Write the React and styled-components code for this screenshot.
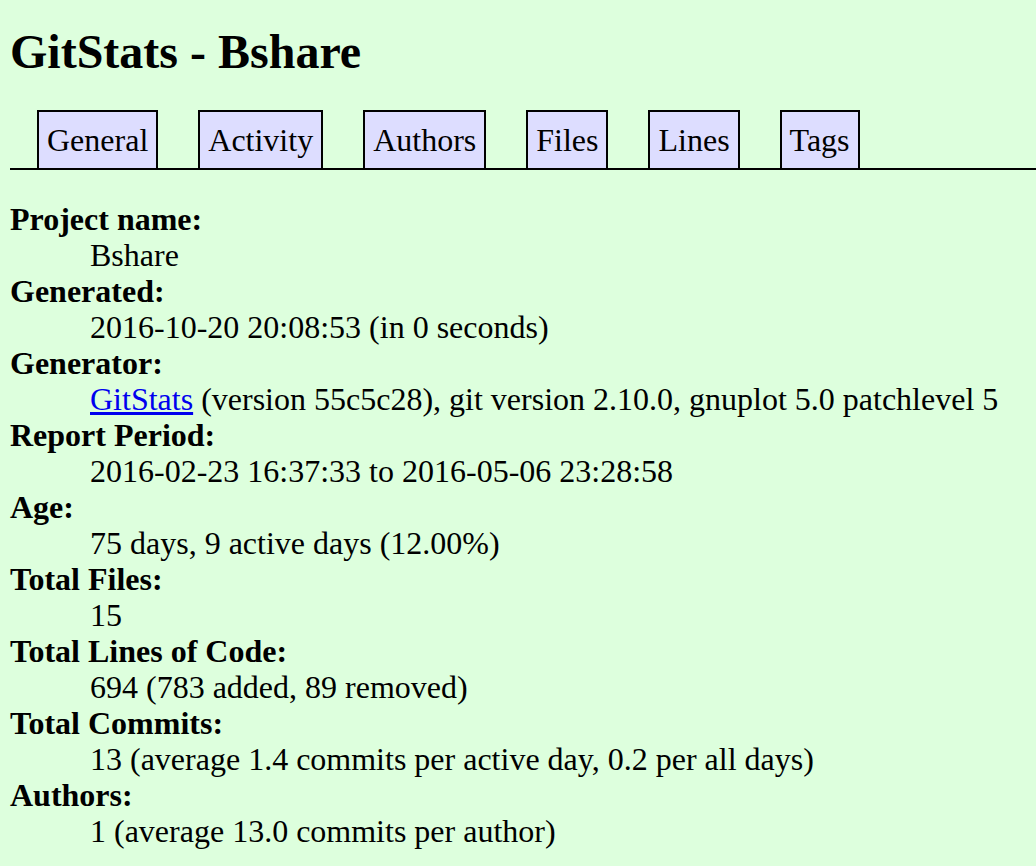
import React from "react";
import styled, { createGlobalStyle } from "styled-components";

const GlobalStyle = createGlobalStyle`
  html, body {
    margin: 0;
    padding: 0;
    background: #ddffdd;
  }
  body {
    color: #000;
    font-family: "Liberation Serif", "Times New Roman", Times, serif;
    font-size: 32px;
    line-height: 36px;
  }
`;

const Page = styled.div`
  padding: 0 0 0 10px;
  min-height: 866px;
  box-sizing: border-box;
`;

const Title = styled.h1`
  margin: 25px 0 31px;
  font-size: 48px;
  line-height: 54px;
  font-weight: bold;
`;

const Nav = styled.nav`
  display: flex;
  align-items: flex-end;
  gap: 40px;
  padding-left: 27px;
  border-bottom: 2px solid #000;
`;

const Tab = styled.a`
  display: block;
  padding: 10px 8px;
  margin-bottom: -2px;
  border: 2px solid #000;
  background: #ddddff;
  color: #000;
  text-decoration: none;
  line-height: 36px;
  cursor: pointer;
`;

const List = styled.dl`
  margin: 31px 0 0;
`;

const Term = styled.dt`
  font-weight: bold;
`;

const Desc = styled.dd`
  margin: 0 0 0 80px;
`;

const Link = styled.a`
  color: #0000ee;
  text-decoration: underline;
`;

const tabs = ["General", "Activity", "Authors", "Files", "Lines", "Tags"];

const rows = [
  ["Project name", "Bshare"],
  ["Generated", "2016-10-20 20:08:53 (in 0 seconds)"],
  [
    "Generator",
    <>
      <Link href="#">GitStats</Link> (version 55c5c28), git version 2.10.0,
      gnuplot 5.0 patchlevel 5
    </>,
  ],
  ["Report Period", "2016-02-23 16:37:33 to 2016-05-06 23:28:58"],
  ["Age", "75 days, 9 active days (12.00%)"],
  ["Total Files", "15"],
  ["Total Lines of Code", "694 (783 added, 89 removed)"],
  ["Total Commits", "13 (average 1.4 commits per active day, 0.2 per all days)"],
  ["Authors", "1 (average 13.0 commits per author)"],
];

export default function App() {
  return (
    <>
      <GlobalStyle />
      <Page>
        <Title>GitStats - Bshare</Title>
        <Nav>
          {tabs.map((t) => (
            <Tab key={t} href="#">
              {t}
            </Tab>
          ))}
        </Nav>
        <List>
          {rows.map(([k, v]) => (
            <React.Fragment key={k}>
              <Term>{k}:</Term>
              <Desc>{v}</Desc>
            </React.Fragment>
          ))}
        </List>
      </Page>
    </>
  );
}
